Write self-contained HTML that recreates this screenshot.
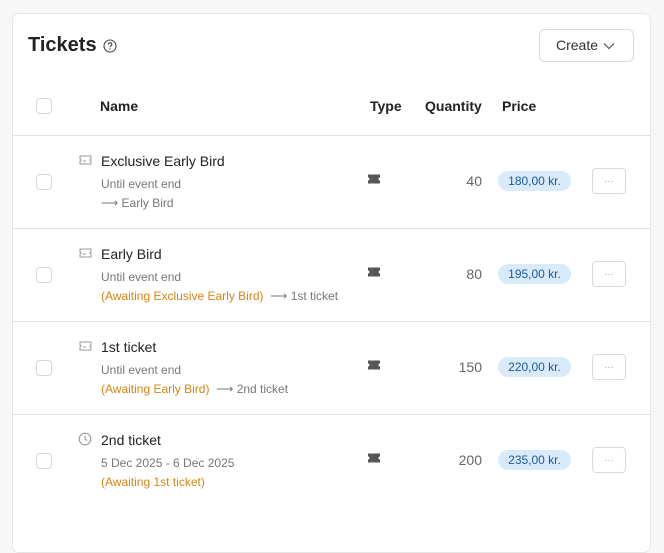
<!DOCTYPE html>
<html><head><style>
*{box-sizing:border-box;margin:0;padding:0}
body{width:664px;height:530px;background:#f7f7f7;font-family:"Liberation Sans",Arial,sans-serif;position:relative;overflow:hidden;color:#222}
.card{position:absolute;left:12px;top:13px;width:639px;height:540px;background:#fff;border:1px solid #e6e6e6;border-radius:7px}
.a{position:absolute;white-space:nowrap}
.cb{position:absolute;left:36px;width:16px;height:16px;border:1px solid #d6d6d6;border-radius:4px;background:#fff}
.hl{position:absolute;left:12px;width:639px;height:1px;background:#e2e2e2}
.th{font-weight:bold;font-size:14px;color:#222}
.nm{font-size:14px;color:#222}
.sb{font-size:12px;color:#777}
.or{color:#d68512}
.qt{font-size:14px;color:#666;text-align:right;width:60px;left:422px}
.pill{position:absolute;left:498px;width:73px;height:20px;border-radius:10px;background:#d9ebfb;color:#1a5a96;font-size:12px;text-align:center;line-height:20px}
.dots{position:absolute;left:592px;width:34px;height:26px;border:1px solid #d9d9d9;border-radius:4px;color:#aaa;font-size:10px;text-align:center;line-height:26px}
</style></head><body>
<div class="card"></div>
<div class="a" style="left:28px;top:34px;font-size:20px;font-weight:bold;color:#222">Tickets</div>
<svg class="a" style="left:103px;top:39px" width="14" height="14" viewBox="0 0 14 14"><circle cx="7" cy="7" r="6" fill="none" stroke="#444" stroke-width="1.1"/><path d="M5.4 5.5a1.7 1.7 0 1 1 2.4 1.5c-.6.3-.8.6-.8 1.2" fill="none" stroke="#444" stroke-width="1.1"/><circle cx="7" cy="10" r=".7" fill="#444"/></svg>
<div class="a" style="left:539px;top:29px;width:95px;height:33px;border:1px solid #d9d9d9;border-radius:6px;font-size:14px;line-height:31px;padding-left:16px;color:#333">Create
<svg style="position:absolute;left:63px;top:12px" width="12" height="8" viewBox="0 0 12 8"><path d="M1 1.5l5 5 5-5" fill="none" stroke="#555" stroke-width="1.2"/></svg></div>
<div class="cb" style="top:98px"></div>
<div class="a th" style="left:100px;top:98px">Name</div>
<div class="a th" style="left:370px;top:98px">Type</div>
<div class="a th" style="left:425px;top:98px">Quantity</div>
<div class="a th" style="left:502px;top:98px">Price</div>
<div class="hl" style="top:135px"></div>
<div class="hl" style="top:228px"></div>
<div class="hl" style="top:321px"></div>
<div class="hl" style="top:414px"></div>

<div class="cb" style="top:174px"></div>
<svg class="a" style="left:79px;top:155px" width="13" height="10" viewBox="0 0 13 10"><path d="M1 1h11v3a1 1 0 0 0 0 2v3H1V6a1 1 0 0 0 0-2z" fill="none" stroke="#999" stroke-width="1"/><path d="M4 6h3" stroke="#999"/></svg>
<div class="a nm" style="left:101px;top:153px">Exclusive Early Bird</div>
<div class="a sb" style="left:101px;top:177px">Until event end</div>
<div class="a sb" style="left:101px;top:196px">⟶ Early Bird</div>
<svg class="a" style="left:367px;top:173px" width="14" height="12" viewBox="0 0 14 12"><path d="M1 1.5h12v3a1.5 1.5 0 0 0 0 3v3H1v-3a1.5 1.5 0 0 0 0-3z" fill="#555"/><path d="M5 1.5v9" stroke="#888" stroke-width=".6" stroke-dasharray="1 1"/></svg>
<div class="a qt" style="top:173px">40</div>
<div class="pill" style="top:171px">180,00 kr.</div>
<div class="dots" style="top:168px">···</div>

<div class="cb" style="top:267px"></div>
<svg class="a" style="left:79px;top:248px" width="13" height="10" viewBox="0 0 13 10"><path d="M1 1h11v3a1 1 0 0 0 0 2v3H1V6a1 1 0 0 0 0-2z" fill="none" stroke="#999" stroke-width="1"/><path d="M4 6h3" stroke="#999"/></svg>
<div class="a nm" style="left:101px;top:246px">Early Bird</div>
<div class="a sb" style="left:101px;top:270px">Until event end</div>
<div class="a sb" style="left:101px;top:289px"><span class="or">(Awaiting Exclusive Early Bird)</span> &nbsp;⟶ 1st ticket</div>
<svg class="a" style="left:367px;top:266px" width="14" height="12" viewBox="0 0 14 12"><path d="M1 1.5h12v3a1.5 1.5 0 0 0 0 3v3H1v-3a1.5 1.5 0 0 0 0-3z" fill="#555"/><path d="M5 1.5v9" stroke="#888" stroke-width=".6" stroke-dasharray="1 1"/></svg>
<div class="a qt" style="top:266px">80</div>
<div class="pill" style="top:264px">195,00 kr.</div>
<div class="dots" style="top:261px">···</div>

<div class="cb" style="top:360px"></div>
<svg class="a" style="left:79px;top:341px" width="13" height="10" viewBox="0 0 13 10"><path d="M1 1h11v3a1 1 0 0 0 0 2v3H1V6a1 1 0 0 0 0-2z" fill="none" stroke="#999" stroke-width="1"/><path d="M4 6h3" stroke="#999"/></svg>
<div class="a nm" style="left:101px;top:339px">1st ticket</div>
<div class="a sb" style="left:101px;top:363px">Until event end</div>
<div class="a sb" style="left:101px;top:382px"><span class="or">(Awaiting Early Bird)</span> &nbsp;⟶ 2nd ticket</div>
<svg class="a" style="left:367px;top:359px" width="14" height="12" viewBox="0 0 14 12"><path d="M1 1.5h12v3a1.5 1.5 0 0 0 0 3v3H1v-3a1.5 1.5 0 0 0 0-3z" fill="#555"/><path d="M5 1.5v9" stroke="#888" stroke-width=".6" stroke-dasharray="1 1"/></svg>
<div class="a qt" style="top:359px">150</div>
<div class="pill" style="top:357px">220,00 kr.</div>
<div class="dots" style="top:354px">···</div>

<div class="cb" style="top:453px"></div>
<svg class="a" style="left:78px;top:432px" width="14" height="14" viewBox="0 0 14 14"><circle cx="7" cy="7" r="5.8" fill="none" stroke="#999" stroke-width="1.1"/><path d="M7 3.5V7l2 1.5" fill="none" stroke="#999" stroke-width="1.1"/></svg>
<div class="a nm" style="left:101px;top:432px">2nd ticket</div>
<div class="a sb" style="left:101px;top:456px">5 Dec 2025 - 6 Dec 2025</div>
<div class="a sb or" style="left:101px;top:475px">(Awaiting 1st ticket)</div>
<svg class="a" style="left:367px;top:452px" width="14" height="12" viewBox="0 0 14 12"><path d="M1 1.5h12v3a1.5 1.5 0 0 0 0 3v3H1v-3a1.5 1.5 0 0 0 0-3z" fill="#555"/><path d="M5 1.5v9" stroke="#888" stroke-width=".6" stroke-dasharray="1 1"/></svg>
<div class="a qt" style="top:452px">200</div>
<div class="pill" style="top:450px">235,00 kr.</div>
<div class="dots" style="top:447px">···</div>
</body></html>
